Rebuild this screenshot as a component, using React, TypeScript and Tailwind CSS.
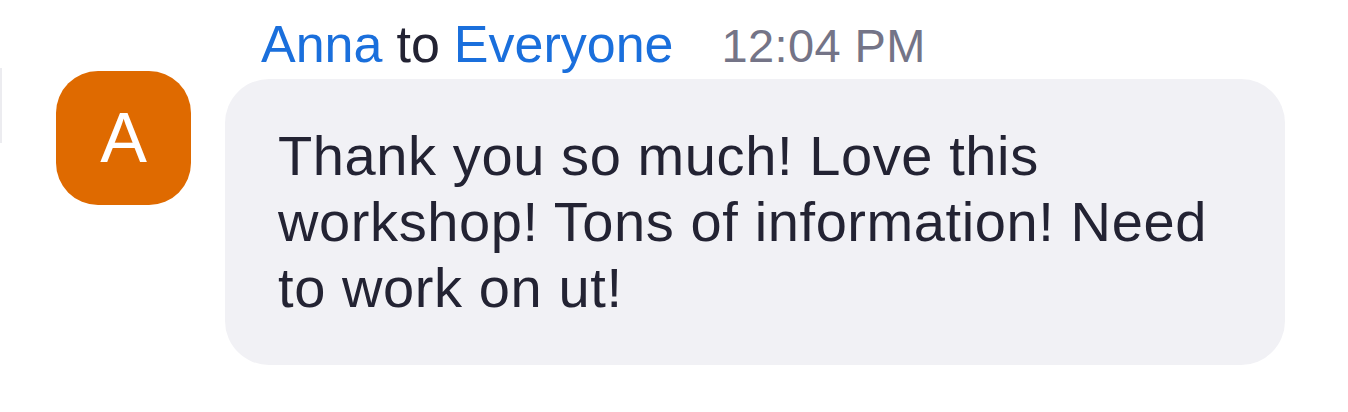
export default function App() {
  return (
    <div className="w-[1348px] h-[412px] bg-white overflow-hidden font-['Liberation_Sans',Arial,sans-serif]">
      <div className="flex items-start pt-[18px]">
        {/* faint edge of the chat panel */}
        <div className="w-[2px] h-[75px] mt-[50px] bg-[#ececf0]" />

        {/* Avatar */}
        <div className="ml-[54px] mt-[53px] w-[135px] h-[134px] rounded-[42px] bg-[#df6a00] flex items-center justify-center text-white text-[70px] leading-none">
          A
        </div>

        {/* Message */}
        <div className="ml-[34px] flex flex-col">
          <div className="flex items-baseline pl-[36px] text-[52px] leading-[52px] text-[#232333]">
            <span className="text-[#1a6fdc]">Anna</span>
            <span className="ml-[14px]">to</span>
            <span className="ml-[14px] text-[#1a6fdc]">Everyone</span>
            <span className="ml-[48px] text-[47px] tracking-[0.4px] text-[#747487]">12:04 PM</span>
          </div>
          <div className="mt-[7px] w-[1060px] rounded-[44px] bg-[#f1f1f5] pl-[53px] pr-[40px] pt-[44px] pb-[44px]">
            <p className="text-[56px] leading-[66px] tracking-[0.6px] text-[#232333]">
              Thank you so much! Love this workshop! Tons of information! Need to work on ut!
            </p>
          </div>
        </div>
      </div>
    </div>
  )
}
